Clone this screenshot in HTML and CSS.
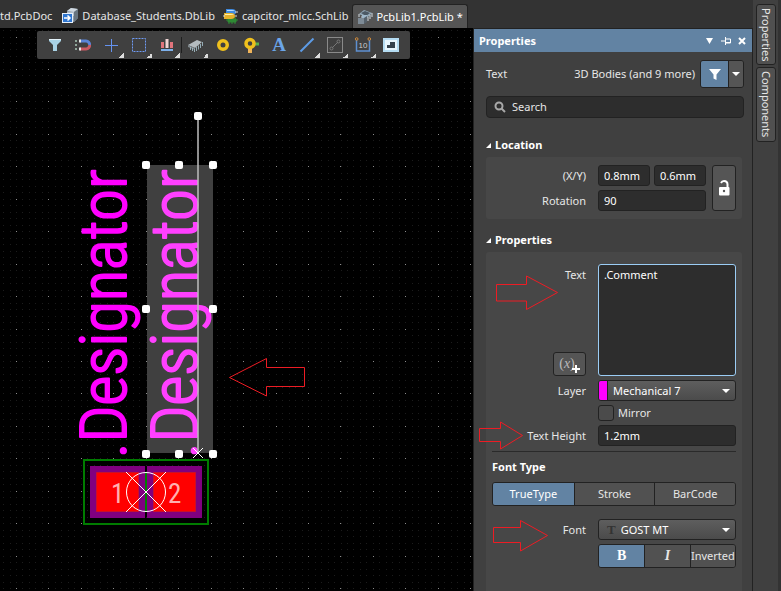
FILE: index.html
```
<!DOCTYPE html>
<html lang="en">
<head>
<meta charset="utf-8">
<title>PcbLib1.PcbLib</title>
<link rel="stylesheet" href="styles.css">
</head>
<body>
<div class="app">
  <nav class="tabs" aria-label="Documents">
    <a class="tab tab-cut" href="#"><span>td.PcbDoc</span></a>
    <a class="tab" href="#">
      <svg class="tab-icon" width="17" height="16" viewBox="0 0 17 16"><path d="M5 3l4-3 7 1v9l-4 4-7-1z" fill="#8b98a5"/><path d="M5 3l4-3 7 1-4 3z" fill="#cfd8e0"/><path d="M5 5h7M5 7h7M12 5l4-3M12 8l4-3" stroke="#dfe6ec"/><path d="M12 4l4-3v9l-4 4z" fill="#69757f"/><rect x="0.500" y="5.500" width="10" height="9" fill="#2f76d0" stroke="#e8f1fb"/><path d="M2 10h6M5.500 7.500L8 10l-2.500 2.500" stroke="#fff" stroke-width="1.500" fill="none"/></svg>
      <span>Database_Students.DbLib</span></a>
    <a class="tab" href="#">
      <svg class="tab-icon" width="16" height="16" viewBox="0 0 16 16"><path d="M3 1h6q4 0 4 3t-4 3H3z" fill="#3f8ade"/><path d="M4 2h5q2 0 3 1H4z" fill="#b7dcff"/><path d="M5 11h8v3H5zM6 10v6M9 10v6M12 9v7M3 12h12" stroke="#2f8a35" fill="#2f8a35"/><path d="M1 5h7q4 0 4 3t-4 3H1z" fill="#e5b22c"/><path d="M2 6h6q2 0 3 1H2z" fill="#fff0a8"/><path d="M0 8h2M12 4h3M12 8h2" stroke="#ddd"/></svg>
      <span>capcitor_mlcc.SchLib</span></a>
    <a class="tab tab-active" href="#" aria-current="page">
      <svg class="tab-icon" width="16" height="16" viewBox="0 0 16 16"><path d="M2 5l5-4 8 3-5 5z" fill="#93a9b8"/><path d="M4 4l4-2 5 2-4 3z" fill="#4c5964"/><path d="M2 5v3M5 7v3M15 4v4M13 6v4M11 8v4" stroke="#d5dde3"/><rect x="5" y="6" width="5" height="4" fill="#9fb7c9"/><rect x="1" y="9" width="6" height="6" fill="#7d8a95"/><path d="M7 9l3-2v6l-3 2z" fill="#56616b"/></svg>
      <span>PcbLib1.PcbLib *</span></a>
  </nav>

  <main class="board">
    <svg class="drawing" aria-label="Footprint">
      <g transform="translate(0 -28)">
        <path id="grid-minor" class="grid-minor"/>
        <path id="grid-major" class="grid-major"/>
        <rect x="84" y="460" width="124" height="64" fill="none" stroke="#007c00" stroke-width="2"/>
        <path fill="#800080" d="M90 466h55v52H90zM147 466h55v52h-55z"/>
        <path fill="#f00" stroke="#c8102a" d="M96.500 472.500h42v39h-42zM153.500 472.500h42v39h-42z"/>
        <path d="M146 472v40" stroke="#008000" stroke-width="2"/>
        <text class="pad" x="111" y="503">1</text>
        <text class="pad" x="168" y="503">2</text>
        <circle cx="146" cy="492" r="19.500" class="thin"/>
        <path class="thin" d="M126 472l40 40M166 472l-40 40"/>
        <rect x="147" y="165" width="66" height="288" fill="#404040"/>
        <text class="silk" transform="translate(126 458) rotate(-90)">.Designator</text>
        <text class="silk silk-selected" transform="translate(197 458) rotate(-90)">.Designator</text>
        <path d="M198 116v337" stroke="#bdbdbd" stroke-opacity=".75" stroke-width="2"/>
        <path d="M193 448l10 10M203 448l-10 10" class="thin"/>
        <g fill="#fff">
          <rect x="194" y="112" width="8" height="8" rx="2"/>
          <rect x="142" y="161" width="8" height="8" rx="2"/><rect x="175" y="161" width="8" height="8" rx="2"/><rect x="209" y="161" width="8" height="8" rx="2"/>
          <rect x="142" y="305" width="8" height="8" rx="2"/><rect x="209" y="305" width="8" height="8" rx="2"/>
          <rect x="142" y="450" width="8" height="8" rx="2"/><rect x="175" y="450" width="8" height="8" rx="2"/><rect x="209" y="450" width="8" height="8" rx="2"/>
        </g>
        <path class="mark" d="M229.500 377.500l37-19v9h38v19h-38v9.500z"/>
      </g>
    </svg>
    <div class="toolbar" role="toolbar" aria-label="Active bar">
      <button class="tool" aria-label="Filter"><svg viewBox="0 0 16 16"><path d="M2 2h12v2L10 8v6H6V8L2 4z" fill="#a9d3e6"/><path d="M2 2h12v1H2z" fill="#e3f3fa"/></svg></button>
      <button class="tool" aria-label="Snap"><svg viewBox="0 0 16 16"><path d="M5 4h6a3.500 3.500 0 0 1 3.500 4" fill="none" stroke="#5a84d8" stroke-width="3"/><path d="M14.500 8A3.500 3.500 0 0 1 11 12H5" fill="none" stroke="#c95a63" stroke-width="3"/><path d="M4 2.500h2v3H4zM4 10.500h2v3H4z" fill="#e6e6e6"/><path d="M0 3h2v2H0zM0 7h2v2H0zM0 11h2v2H0z" fill="#8fa79a"/></svg></button>
      <button class="tool more" aria-label="Move"><svg viewBox="0 0 16 16"><path d="M8 2h1v13H8zM2 8h13v1H2z" fill="#6593f0"/></svg></button>
      <button class="tool more" aria-label="Select"><svg viewBox="0 0 16 16"><rect x="1.500" y="1.500" width="13" height="13" fill="none" stroke="#6f9bf5" stroke-dasharray="2 1"/></svg></button>
      <button class="tool more" aria-label="Align"><svg viewBox="0 0 16 16"><path d="M2 5h3v6H2zM11 5h3v6h-3z" fill="#e0747c"/><path d="M6.500 2h3v9h-3z" fill="#f0d4d4"/><path d="M2 12h12v2H2z" fill="#7db0ea"/></svg></button>
      <button class="tool more ruled" aria-label="Component"><svg viewBox="0 0 16 16"><path d="M1 8l9-5 5 2-7 6z" fill="#b4bcc0"/><path d="M1 8l7 3v2L1 10z" fill="#7f888d"/><path d="M3.500 10v3M5.500 11v3M7.500 12v3M9.500 10v4M11.500 8.500v4M13.500 7v4M15.500 5v4" stroke="#a9c6d2" stroke-width=".8"/></svg></button>
      <button class="tool" aria-label="Pad"><svg viewBox="0 0 16 16"><circle cx="8" cy="8" r="4.250" fill="none" stroke="#efc01d" stroke-width="3.500"/></svg></button>
      <button class="tool" aria-label="Via"><svg viewBox="0 0 16 16"><path d="M5 9h4v7H5z" fill="#f0b45a"/><path d="M10 5.500h6v3h-6z" fill="#59b04c"/><circle cx="7" cy="6.500" r="4" fill="none" stroke="#efc01d" stroke-width="3.500"/></svg></button>
      <button class="tool letter" aria-label="String">A</button>
      <button class="tool more" aria-label="Line"><svg viewBox="0 0 16 16"><path d="M1.500 14.500l13-13" stroke="#5d9be6" stroke-width="2"/></svg></button>
      <button class="tool more" aria-label="Track"><svg viewBox="0 0 16 16"><rect x=".5" y=".5" width="15" height="15" fill="none" stroke="#8a8a8a"/><path d="M5 11l6-6" stroke="#777"/><circle cx="4.500" cy="11.500" r="1.500" fill="none" stroke="#777"/><circle cx="11.500" cy="4.500" r="1.500" fill="none" stroke="#777"/></svg></button>
      <button class="tool more" aria-label="Dimension"><svg viewBox="0 0 16 16"><path d="M1.500 3v11h13V3" fill="none" stroke="#5d8fd0" stroke-width="1.500"/><circle cx="1.700" cy="2" r="1.300" fill="none" stroke="#cf8a3c"/><circle cx="14.300" cy="2" r="1.300" fill="none" stroke="#cf8a3c"/><text x="8" y="11" text-anchor="middle" class="tiny">10</text></svg></button>
      <button class="tool" aria-label="Polygon"><svg viewBox="0 0 16 16"><path d="M0 1h16v14H0z" fill="#b5dcf2"/><path d="M2 3h12v10H2z" fill="#e8f6fd"/><path d="M7 5h5v6H4V8h3z" fill="#36424c"/></svg></button>
    </div>
  </main>

  <aside class="panel" aria-label="Properties">
    <header class="panel-head">
      <h1>Properties</h1>
      <button aria-label="Menu"><svg viewBox="0 0 10 10"><path d="M1 2h7L4.500 8z" fill="#fff"/></svg></button>
      <button aria-label="Pin"><svg viewBox="0 0 10 10"><path d="M0 5h4M4.500 1v8M4.500 3h5v4h-5M4.500 6.500h5" stroke="#fff" fill="none"/></svg></button>
      <button aria-label="Close"><svg viewBox="0 0 10 10"><path d="M2 2l6 6M8 2L2 8" stroke="#fff" stroke-width="2"/></svg></button>
    </header>
    <div class="panel-body">
      <div class="scope">
        <span>Text</span><span class="scope-set">3D Bodies (and 9 more)</span>
        <div class="split">
          <button class="on" aria-label="Filter objects"><svg width="12" height="12" viewBox="0 0 12 12"><path d="M0 1h12L7.500 6.500V12l-3-1.500v-4z" fill="#fff"/></svg></button>
          <button aria-label="Choose objects"><svg width="8" height="8" viewBox="0 0 8 8"><path d="M0 2h8L4 6z" fill="#fff"/></svg></button>
        </div>
      </div>
      <label class="search">
        <svg width="12" height="12" viewBox="0 0 12 12"><circle cx="5" cy="5" r="3.500" fill="none" stroke="#a8a8a8" stroke-width="2"/><path d="M7.500 7.500l3.500 3.500" stroke="#a8a8a8" stroke-width="2"/></svg>
        <input type="search" placeholder="Search" aria-label="Search">
      </label>

      <h2><svg width="5" height="5" viewBox="0 0 5 5"><path d="M5 0v5H0z" fill="#fff"/></svg>Location</h2>
      <section class="box location">
        <label class="lab" for="pos-x">(X/Y)</label>
        <div class="pair"><input id="pos-x" value="0.8mm"><input aria-label="Y" value="0.6mm"></div>
        <button class="lock" aria-label="Lock"><svg width="12" height="16" viewBox="0 0 12 16"><path d="M3 3q1-2 3-2 3.500 0 3.500 3.500V8" fill="none" stroke="#fff" stroke-width="2"/><rect x="1" y="7" width="10.500" height="8.500" rx="1" fill="#fff"/><circle cx="6" cy="11" r="1.200" fill="#555"/></svg></button>
        <label class="lab" for="rot">Rotation</label>
        <input id="rot" value="90">
      </section>

      <h2><svg width="5" height="5" viewBox="0 0 5 5"><path d="M5 0v5H0z" fill="#fff"/></svg>Properties</h2>
      <section class="box props">
        <div class="row row-text">
          <div class="side"><label for="txt">Text</label>
            <button class="fx" aria-label="Insert expression">(<i>x</i>)<svg width="8" height="8" viewBox="0 0 8 8"><path d="M4 0v8M0 4h8" stroke="#fff" stroke-width="2"/></svg></button></div>
          <textarea id="txt">.Comment</textarea>
        </div>
        <div class="row"><label class="lab" for="layer">Layer</label>
          <div class="drop"><span class="swatch"></span><select id="layer"><option>Mechanical 7</option></select><svg class="caret" width="8" height="8" viewBox="0 0 8 8"><path d="M0 2h8L4 6z" fill="#fff"/></svg></div></div>
        <div class="row row-check"><span></span><label class="check"><input type="checkbox">Mirror</label></div>
        <div class="row"><label class="lab" for="th">Text Height</label><input id="th" value="1.2mm"></div>
        <hr>
        <h3>Font Type</h3>
        <div class="seg seg-type"><button class="on">TrueType</button><button>Stroke</button><button>BarCode</button></div>
        <div class="row"><label class="lab" for="font">Font</label>
          <div class="drop drop-font"><span class="glyph" aria-hidden="true">T</span><select id="font"><option>GOST MT</option></select><svg class="caret" width="8" height="8" viewBox="0 0 8 8"><path d="M0 2h8L4 6z" fill="#fff"/></svg></div></div>
        <div class="row"><span></span><div class="seg seg-style"><button class="on serif">B</button><button class="serif slant">I</button><button>Inverted</button></div></div>
      </section>
    </div>
    <svg class="marks" aria-hidden="true">
      <g transform="translate(-474 -29)" class="mark">
        <path d="M496.500 284.500h30v-8.500l31 16.500-31 17v-8.500h-30z"/>
        <path d="M479.500 428.500h21v-6.500l22 13.500-22 13.500v-7.500h-21z"/>
        <path d="M493.500 527.500h27v-7l27 15-27 15.500v-8.500h-27z"/>
      </g>
    </svg>
  </aside>

  <nav class="dock" aria-label="Panels">
    <a href="#">Properties</a>
    <a href="#">Components</a>
  </nav>
</div>
<script src="grid.js"></script>
</body>
</html>
```
FILE: styles.css
```
* { box-sizing: border-box; }
html, body { height: 100%; }
body {
  margin: 0;
  background: #000;
  color: #e6e6e6;
  font: 11px/16px "Noto Sans", "Open Sans", sans-serif;
  overflow: hidden;
}
button, input, select, textarea { font: inherit; color: inherit; margin: 0; }
button { padding: 0; cursor: pointer; }
a { color: inherit; text-decoration: none; }
h1, h2, h3 { margin: 0; font-size: 11px; font-weight: 700; color: #fff; }

.app {
  display: grid;
  grid-template: 28px minmax(0, 1fr) / minmax(0, 1fr) 280px 28px;
  height: 100vh;
}

.tabs { grid-column: 1 / 3; display: flex; align-items: flex-end; background: #333; overflow: hidden; }
.tab { display: flex; align-items: center; gap: 3px; height: 24px; padding: 0 4px; white-space: nowrap; border-radius: 3px 3px 0 0; }
.tab-cut { padding: 0 6px 0 0; }
.tab-icon { flex: none; }
.tab-active { background: #555; border: 1px solid #222; border-bottom: 0; color: #fff; }

.board { position: relative; min-width: 0; overflow: hidden; background: #000; }
.drawing { display: block; width: 100%; height: 100%; }
.grid-minor { stroke: #1c1c1c; fill: none; shape-rendering: crispEdges; }
.grid-major { stroke: #8c8c8c; fill: none; shape-rendering: crispEdges; }
.silk { font: 300 65px "Roboto Condensed", "Liberation Sans Narrow", "Liberation Sans", sans-serif; fill: #f0f; stroke: #f0f; stroke-width: 2px; stroke-linejoin: round; }
.silk-selected { fill: #ff40ff; stroke: #ff40ff; }
.pad { font: 27px "Roboto Condensed", "Liberation Sans Narrow", "Liberation Sans", sans-serif; fill: #ffb0b0; }
.thin { fill: none; stroke: #fff; }
.mark { fill: none; stroke: #ed1c24; }

.toolbar {
  position: absolute; left: 37px; top: 3px;
  display: flex; align-items: center;
  height: 28px; padding: 0 5px 0 4px;
  background: #404040; border-radius: 2px;
}
.tool {
  position: relative; display: flex; align-items: center; justify-content: center;
  width: 28px; height: 28px; border: 0; background: none;
}
.tool svg { width: 16px; height: 16px; }
.more::after {
  content: ""; position: absolute; right: 1px; bottom: 1px;
  width: 5px; height: 5px;
  background: linear-gradient(135deg, transparent 50%, #ddd 50%);
}
.ruled::before { content: ""; position: absolute; left: 0; top: 6px; bottom: 6px; width: 1px; background: #1e1e1e; }
.letter { font: bold 19px "Liberation Serif", serif; color: #6ba5e8; }
.tiny { font: 8px "Liberation Sans", sans-serif; fill: #ccc; }

.panel { position: relative; display: flex; flex-direction: column; min-height: 0; background: #404040; border: 1px solid #222; border-bottom: 0; }
.panel-head { display: flex; align-items: center; gap: 6px; height: 23px; flex: none; padding: 0 5px; background: #6283a3; }
.panel-head h1 { flex: 1; }
.panel-head button { width: 10px; height: 10px; border: 0; background: none; display: flex; }
.panel-head svg { width: 10px; height: 10px; }
.panel-body { flex: 1; min-height: 0; display: flex; flex-direction: column; padding: 8px 8px 0 12px; overflow: hidden; }

.scope { display: flex; align-items: center; height: 28px; flex: none; }
.scope-set { margin-left: auto; margin-right: 5px; }
.split { display: flex; height: 28px; border: 1px solid #222; border-radius: 3px; overflow: hidden; }
.split button { display: flex; align-items: center; justify-content: center; width: 14px; border: 0; background: #555; }
.split .on { width: 28px; border-right: 1px solid #222; }
.on.on { background: #6283a3; color: #fff; }

.search { display: flex; align-items: center; gap: 6px; flex: none; height: 22px; margin: 8px 0 19px; padding: 0 7px; background: #2d2d2d; border: 1px solid #222; border-radius: 4px; }
.search input { flex: 1; min-width: 0; border: 0; padding: 0; background: none; outline: 0; }
.search input::placeholder { color: #e6e6e6; opacity: 1; }

h2 { display: flex; align-items: center; gap: 4px; height: 16px; margin-bottom: 4px; flex: none; }

.box { background: #474747; border-radius: 3px; margin-right: 2px; padding: 8px 6px; }
.box input:not([type]), .box textarea { width: 100%; min-width: 0; height: 21px; padding: 0 5px; background: #2d2d2d; color: #fff; border: 1px solid #222; border-radius: 3px; outline: 0; }
.lab { text-align: right; padding-right: 12px; }
.location { display: grid; grid-template-columns: 106px minmax(0, 1fr) 24px; gap: 4px 0; align-items: center; flex: none; margin-bottom: 13px; }
.location .lock { grid-column: 3; grid-row: 1 / 3; height: 46px; }
.pair { display: flex; gap: 4px; }
.pair, .location #rot { margin-right: 6px; }
.location #rot { width: auto; }
.lock, .fx { display: flex; align-items: center; justify-content: center; background: #555; border: 1px solid #222; border-radius: 3px; }

.props { flex: 1; padding-top: 12px; display: flex; flex-direction: column; gap: 4px; border-radius: 3px 3px 0 0; }
.row { display: grid; grid-template-columns: 106px minmax(0, 1fr); align-items: center; flex: none; }
.row-text { align-items: stretch; }
.side { display: flex; flex-direction: column; justify-content: space-between; align-items: flex-end; padding: 3px 12px 0 0; }
.fx { width: 33px; height: 24px; font: 14px "Liberation Serif", serif; color: #bbb; }
.fx svg { margin: 9px 0 0 -3px; }
.box textarea { display: block; height: 112px; padding: 2px 5px; border-color: #9bcdf5; resize: none; }
.drop { position: relative; display: flex; height: 21px; background: linear-gradient(#5e5e5e, #4b4b4b); border: 1px solid #222; border-radius: 3px; overflow: hidden; }
.drop select { flex: 1; appearance: none; min-width: 0; padding: 0 5px; border: 0; background: none; color: #fff; outline: 0; }
.swatch { width: 9px; background: #f0f; border-right: 1px solid #222; }
.caret { position: absolute; right: 5px; top: 6px; pointer-events: none; }
.glyph { padding-left: 8px; font: bold 13px/20px "Liberation Serif", serif; color: #333; }
.check { display: flex; align-items: center; gap: 4px; height: 16px; }
.check input { appearance: none; width: 16px; height: 16px; background: #4b4b4b; border: 1px solid #222; border-radius: 3px; }
hr { width: 100%; height: 1px; margin: 1px 0 3px; border: 0; background: #2a2a2a; }
.seg { display: grid; height: 24px; border: 1px solid #222; border-radius: 3px; overflow: hidden; }
.seg button { border: 0; background: #515151; white-space: nowrap; }
.seg button + button { border-left: 1px solid #222; }
.seg-type { grid-template-columns: 1fr 1fr 1fr; margin: 3px 0 9px; }
.seg-style { grid-template-columns: 1fr 1fr 1fr; }
.seg .serif { font: bold 14px "Liberation Serif", serif; }
.seg .slant { font-style: italic; }
.marks { position: absolute; left: 0; top: 0; width: 100%; height: 100%; pointer-events: none; }

.dock { grid-column: 3; grid-row: 1 / 3; display: flex; flex-direction: column; gap: 2px; align-items: flex-start; padding: 4px 0 0 3px; background: #404040; border-right: 3px solid #333; }
.dock a { writing-mode: vertical-rl; width: 20px; padding: 3px 0; line-height: 18px; background: #505050; border: 1px solid #222; border-radius: 3px; }
```
FILE: grid.js
```
// Board grid: minor dots every fifth of a major step.
const STEP = 32.45;
const ORIGIN = { x: 16.5, y: 37 };

function dots(step, width, height) {
  let d = "";
  for (let y = ORIGIN.y % step; y < height; y += step)
    for (let x = ORIGIN.x % step; x < width; x += step)
      d += `M${Math.floor(x)} ${Math.floor(y) + 0.5}h1`;
  return d;
}

document.getElementById("grid-minor").setAttribute("d", dots(STEP / 5, innerWidth, innerHeight));
document.getElementById("grid-major").setAttribute("d", dots(STEP, innerWidth, innerHeight));
```
